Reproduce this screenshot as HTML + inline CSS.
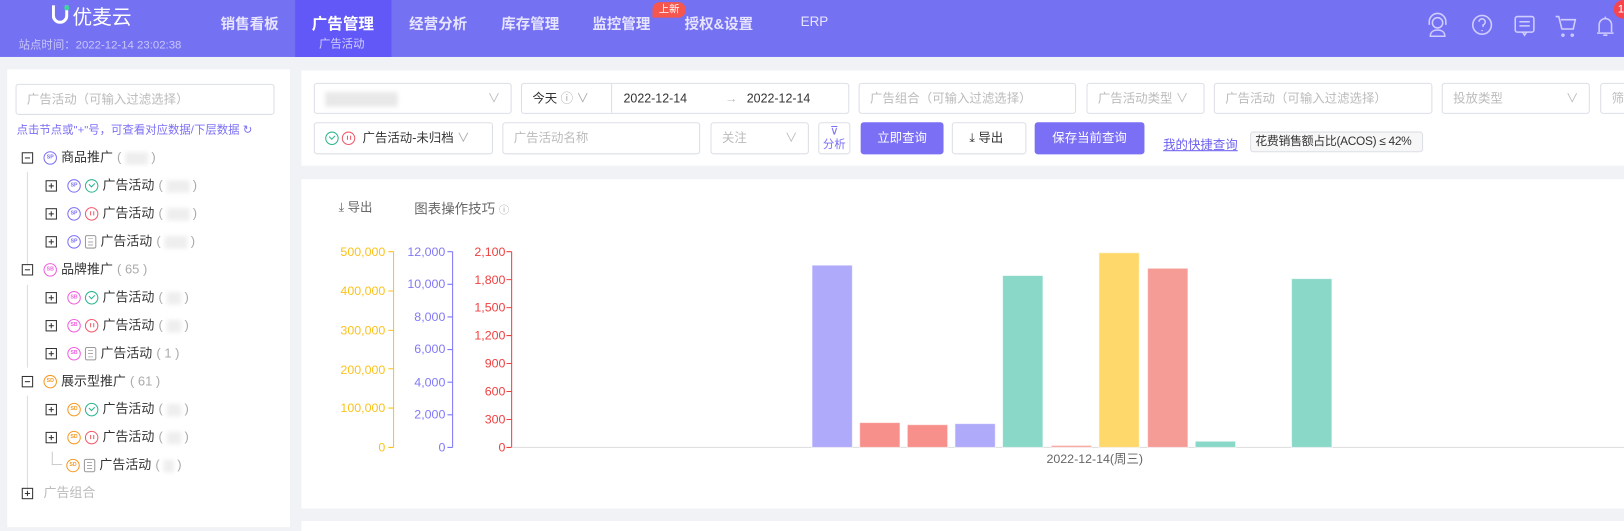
<!DOCTYPE html>
<html><head><meta charset="utf-8"><style>
*{box-sizing:border-box;margin:0;padding:0}
html,body{width:1624px;height:527px;overflow:hidden;background:#f0f2f5}
body{font-family:"Liberation Sans","Noto Sans CJK SC",sans-serif;color:#333}
#w{position:absolute;left:0;top:0;width:1568px;height:509px;transform:scale(1.03571);transform-origin:0 0;font-size:12px}
.a{position:absolute}
.hd{left:0;top:0;width:1568px;height:55px;background:#7571f3}
.nav{top:13px;color:#e6e4ff;font-size:14px;font-weight:bold}
.box{position:absolute;border:1px solid #dcdfe6;border-radius:3px;background:#fff;color:#bbb;font-size:12px;line-height:28px;padding-left:10px;white-space:nowrap;overflow:hidden}
.btn{position:absolute;border-radius:3px;background:#7b6ff5;color:#fff;font-size:12px;line-height:30px;text-align:center}
.row{position:absolute;height:20px;line-height:20px;font-size:12.5px;white-space:nowrap;display:flex;align-items:center;gap:4px}
.pm{display:inline-block;width:11px;height:11px;border:1px solid #333;position:relative;margin-right:6px}
.pm:before{content:"";position:absolute;left:2px;top:4px;width:5px;height:1px;background:#333}
.pm.p:after{content:"";position:absolute;left:4px;top:2px;width:1px;height:5px;background:#333}
.ic{display:inline-block;width:13px;height:13px;border-radius:50%;border:1.3px solid;font-size:5px;line-height:10px;text-align:center;font-weight:bold}
.ok{display:inline-block;width:13px;height:13px;border-radius:50%;border:1.3px solid #2bb58e;position:relative}
.ok:after{content:"";position:absolute;left:3px;top:2px;width:4px;height:2.5px;border-left:1.3px solid #2bb58e;border-bottom:1.3px solid #2bb58e;transform:rotate(-45deg)}
.ps{display:inline-block;width:13px;height:13px;border-radius:50%;border:1.3px solid #f05a6a;position:relative}
.ps:after{content:"";position:absolute;left:3.5px;top:3px;height:4px;border-left:1.3px solid #f05a6a;border-right:1.3px solid #f05a6a;width:2px}
.dc{display:inline-block;width:11px;height:13px;border:1.2px solid #999;border-radius:2px;background:repeating-linear-gradient(#fff 0 2px,#aaa 2px 3px);background-clip:content-box;padding:2px}
.g{color:#aaa}
.bl{display:inline-block;width:22px;height:12px;background:#eee;filter:blur(2px);vertical-align:middle}
</style></head><body><div id="w">
<div class="a hd"></div>
<div class="a" style="left:285px;top:0;width:93px;height:55px;background:#6158f7"></div>
<div class="a" style="left:50px;top:5px;width:16px;height:18px;border:3px solid #fff;border-top:none;border-radius:0 0 8px 8px"></div>
<div class="a" style="left:62px;top:5px;width:5px;height:5px;border-radius:50%;background:#3fd3a0"></div>
<div class="a" style="left:70px;top:2px;color:#fff;font-size:19px">优麦云</div>
<div class="a" style="left:18px;top:35px;color:#c8c6fa;font-size:11px">站点时间：2022-12-14 23:02:38</div>
<div class="a nav" style="left:213px">销售看板</div>
<div class="a nav" style="left:301px;color:#fff;font-size:15px;top:12px">广告管理</div>
<div class="a" style="left:308px;top:34px;color:#d3d0ff;font-size:11px">广告活动</div>
<div class="a nav" style="left:395px">经营分析</div>
<div class="a nav" style="left:484px">库存管理</div>
<div class="a nav" style="left:572px">监控管理</div>
<div class="a nav" style="left:661px">授权&amp;设置</div>
<div class="a nav" style="left:773px;font-weight:normal;font-size:13px">ERP</div>
<div class="a" style="left:630px;top:2px;width:32px;height:15px;border-radius:7px 7px 7px 0;background:#f5564d;color:#fff;font-size:10px;line-height:15px;text-align:center">上新</div>
<svg class="a" style="left:1370px;top:10px" width="198" height="30" fill="none" stroke="#d0ceff" stroke-width="1.5">
<circle cx="18" cy="12" r="5"/><path d="M10 14v-3a8 8 0 0 1 16 0v3M11 25c0-4 3-6 7-6s7 2 7 6z"/>
<circle cx="61" cy="14" r="9"/><path d="M58 11a3 3 0 1 1 4 3v2M61 19v1"/>
<rect x="93" y="6" width="18" height="15" rx="2"/><path d="M97 11h10M97 15h10M100 21l2 3 2-3"/>
<path d="M132 6h3l3 12h11l2-9h-14M139 23a1 1 0 1 0 .1 0M148 23a1 1 0 1 0 .1 0"/>
<path d="M172 22h16M174 21v-7a6 6 0 0 1 12 0v7M178 24h4M180 6v2"/>
</svg>
<div class="a" style="left:1558px;top:0;width:20px;height:18px;border-radius:9px;background:#f5464f;color:#fff;font-size:11px;padding-left:4px;line-height:18px">1</div>

<!-- left panel -->
<div class="a" style="left:7px;top:67px;width:273px;height:442px;background:#fff"></div>
<div class="box" style="left:15px;top:81px;width:250px;height:30px;line-height:28px;font-size:12px">广告活动（可输入过滤选择）</div>
<div class="a" style="left:16px;top:117px;color:#7b6ff5;font-size:11px">点击节点或"+"号，可查看对应数据/下层数据 ↻</div>
<div class="a" style="left:26px;top:166px;width:1px;height:90px;background:#ddd"></div>
<div class="a" style="left:26px;top:275px;width:1px;height:80px;background:#ddd"></div>
<div class="a" style="left:26px;top:382px;width:1px;height:95px;background:#ddd"></div>
<div class="a" style="left:50px;top:436px;width:10px;height:13px;border-left:1px solid #ccc;border-bottom:1px solid #ccc"></div>

<div class="row" style="left:21px;top:142px"><span class="pm"></span><span class="ic" style="color:#7b6ff5">SP</span> 商品推广<span class="g">( <span class="bl"></span> )</span></div>
<div class="row" style="left:44px;top:169px"><span class="pm p"></span><span class="ic" style="color:#7b6ff5">SP</span><span class="ok"></span>广告活动<span class="g">( <span class="bl"></span> )</span></div>
<div class="row" style="left:44px;top:196px"><span class="pm p"></span><span class="ic" style="color:#7b6ff5">SP</span><span class="ps"></span>广告活动<span class="g">( <span class="bl"></span> )</span></div>
<div class="row" style="left:44px;top:223px"><span class="pm p"></span><span class="ic" style="color:#7b6ff5">SP</span><span class="dc"></span>广告活动<span class="g">( <span class="bl"></span> )</span></div>
<div class="row" style="left:21px;top:250px"><span class="pm"></span><span class="ic" style="color:#f060e0">SB</span> 品牌推广<span class="g">( 65 )</span></div>
<div class="row" style="left:44px;top:277px"><span class="pm p"></span><span class="ic" style="color:#f060e0">SB</span><span class="ok"></span>广告活动<span class="g">( <span class="bl" style="width:14px"></span> )</span></div>
<div class="row" style="left:44px;top:304px"><span class="pm p"></span><span class="ic" style="color:#f060e0">SB</span><span class="ps"></span>广告活动<span class="g">( <span class="bl" style="width:14px"></span> )</span></div>
<div class="row" style="left:44px;top:331px"><span class="pm p"></span><span class="ic" style="color:#f060e0">SB</span><span class="dc"></span>广告活动<span class="g">( 1 )</span></div>
<div class="row" style="left:21px;top:358px"><span class="pm"></span><span class="ic" style="color:#f59a23">SD</span> 展示型推广<span class="g">( 61 )</span></div>
<div class="row" style="left:44px;top:385px"><span class="pm p"></span><span class="ic" style="color:#f59a23">SD</span><span class="ok"></span>广告活动<span class="g">( <span class="bl" style="width:14px"></span> )</span></div>
<div class="row" style="left:44px;top:412px"><span class="pm p"></span><span class="ic" style="color:#f59a23">SD</span><span class="ps"></span>广告活动<span class="g">( <span class="bl" style="width:14px"></span> )</span></div>
<div class="row" style="left:64px;top:439px"><span class="ic" style="color:#f59a23">SD</span><span class="dc"></span>广告活动<span class="g">( <span class="bl" style="width:10px"></span> )</span></div>
<div class="row" style="left:21px;top:466px"><span class="pm p"></span><span style="color:#bbb">广告组合</span></div>

<!-- filter panel -->
<div class="a" style="left:291px;top:68px;width:1277px;height:92px;background:#fff"></div>
<div class="box" style="left:303px;top:80px;width:191px;height:30px"><span style="display:inline-block;width:70px;height:14px;background:#e8e8e8;vertical-align:middle;filter:blur(2px)"></span><span style="position:absolute;right:10px">∨</span></div>
<div class="box" style="left:503px;top:80px;width:317px;height:30px;color:#333">今天 <span class="g">ⓘ ∨</span><span style="position:absolute;left:86px;top:0;height:28px;border-left:1px solid #dcdfe6"></span><span style="position:absolute;left:98px">2022-12-14</span><span style="position:absolute;left:196px;color:#bbb">→</span><span style="position:absolute;left:217px">2022-12-14</span></div>
<div class="box" style="left:829px;top:80px;width:210px;height:30px">广告组合（可输入过滤选择）</div>
<div class="box" style="left:1049px;top:80px;width:114px;height:30px">广告活动类型 ∨</div>
<div class="box" style="left:1172px;top:80px;width:211px;height:30px">广告活动（可输入过滤选择）</div>
<div class="box" style="left:1392px;top:80px;width:143px;height:30px">投放类型<span style="position:absolute;right:10px">∨</span></div>
<div class="box" style="left:1545px;top:80px;width:40px;height:30px">筛</div>

<div class="box" style="left:303px;top:118px;width:173px;height:31px;color:#333;padding-left:10px"><span class="ok" style="vertical-align:middle"></span> <span class="ps" style="vertical-align:middle"></span>&nbsp; 广告活动-未归档 <span class="g">∨</span></div>
<div class="box" style="left:485px;top:118px;width:191px;height:31px">广告活动名称</div>
<div class="box" style="left:686px;top:118px;width:95px;height:31px">关注<span style="position:absolute;right:10px">∨</span></div>
<div class="box" style="left:790px;top:118px;width:31px;height:31px;padding:0;color:#7b6ff5;font-size:11px;line-height:13px;text-align:center;padding-top:2px">⊽<br>分析</div>
<div class="btn" style="left:831px;top:118px;width:80px;height:31px">立即查询</div>
<div class="box" style="left:919px;top:118px;width:72px;height:31px;color:#333;line-height:29px;padding-left:16px">⤓ 导出</div>
<div class="btn" style="left:999px;top:118px;width:106px;height:31px">保存当前查询</div>
<div class="a" style="left:1123px;top:131px;color:#6b5ff0;text-decoration:underline;font-size:12px">我的快捷查询</div>
<div class="box" style="left:1207px;top:127px;width:167px;height:20px;line-height:18px;color:#333;padding-left:4px;background:#f7f7f7;font-size:11.5px;letter-spacing:-0.3px">花费销售额占比(ACOS) ≤ 42%</div>

<!-- chart panel -->
<div class="a" style="left:291px;top:173px;width:1277px;height:318px;background:#fff"></div>
<div class="a" style="left:291px;top:503px;width:1277px;height:10px;background:#fff"></div>
<div class="a" style="left:327px;top:191px;color:#666;font-size:12px">⤓ 导出</div>
<div class="a" style="left:400px;top:191px;color:#666;font-size:13px">图表操作技巧 <span style="font-size:10px;color:#aaa">ⓘ</span></div>
<svg class="a" style="left:0;top:0" width="1568" height="509" font-family="Liberation Sans,sans-serif" font-size="12">
<g stroke="#fcc21b" fill="#fcc21b"><line x1="380" y1="243" x2="380" y2="432"/>
<g text-anchor="end" stroke="none">
<text x="372" y="247">500,000</text><text x="372" y="285">400,000</text><text x="372" y="323">300,000</text><text x="372" y="361">200,000</text><text x="372" y="398">100,000</text><text x="372" y="436">0</text></g>
<path d="M375 243h5M375 281h5M375 319h5M375 356h5M375 394h5M375 432h5"/></g>
<g stroke="#8179f5" fill="#8179f5"><line x1="437" y1="243" x2="437" y2="432"/>
<g text-anchor="end" stroke="none"><text x="430" y="247">12,000</text><text x="430" y="278">10,000</text><text x="430" y="310">8,000</text><text x="430" y="341">6,000</text><text x="430" y="373">4,000</text><text x="430" y="404">2,000</text><text x="430" y="436">0</text></g>
<path d="M432 243h5M432 274.5h5M432 306h5M432 337.5h5M432 369h5M432 400.5h5M432 432h5"/></g>
<g stroke="#ef4040" fill="#ef4040"><line x1="494" y1="243" x2="494" y2="432"/>
<g text-anchor="end" stroke="none"><text x="488" y="247">2,100</text><text x="488" y="274">1,800</text><text x="488" y="301">1,500</text><text x="488" y="328">1,200</text><text x="488" y="355">900</text><text x="488" y="382">600</text><text x="488" y="409">300</text><text x="488" y="436">0</text></g>
<path d="M489 243h5M489 270h5M489 297h5M489 324h5M489 351h5M489 378h5M489 405h5M489 432h5"/></g>
<line x1="494" y1="432" x2="1568" y2="432" stroke="#e0e0e0"/>
<g stroke="#fff" stroke-width="1" stroke-opacity=".6">
<rect x="784" y="256" width="39" height="176" fill="#b0aafa"/>
<rect x="830" y="408" width="39" height="24" fill="#f7908a"/>
<rect x="876" y="410" width="39" height="22" fill="#f7908a"/>
<rect x="922" y="409" width="39" height="23" fill="#b0aafa"/>
<rect x="968" y="266" width="39" height="166" fill="#8ad8c8"/>
<rect x="1015" y="430" width="39" height="2" fill="#f7a7a2"/>
<rect x="1061" y="244" width="39" height="188" fill="#ffd86c"/>
<rect x="1108" y="259" width="39" height="173" fill="#f59c96"/>
<rect x="1154" y="426" width="39" height="6" fill="#8ad8c8"/>
<rect x="1247" y="269" width="39" height="163" fill="#8ad8c8"/>
</g>
<text x="1057" y="447" text-anchor="middle" fill="#666" font-size="12" font-family="Liberation Sans,Noto Sans CJK SC,sans-serif">2022-12-14(周三)</text>
</svg>
</div></body></html>
